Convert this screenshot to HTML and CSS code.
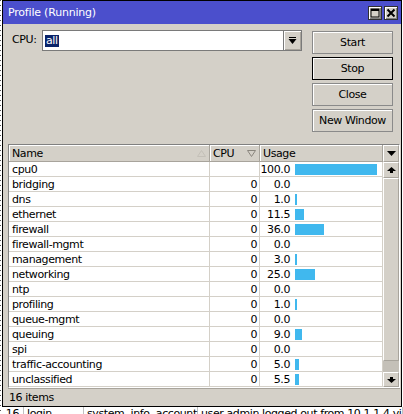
FILE: index.html
```html
<!DOCTYPE html>
<html>
<head>
    <meta charset="UTF-8">
    <title>Profile (Running)</title>
    <link rel="stylesheet" href="styles.css">
</head>
<body>
    <div class="window">
        <div class="titlebar">
            <div class="title">Profile (Running)</div>
            <div class="title-btn">
                <svg width="10" height="10" viewBox="0 0 10 10"><rect x="1" y="1" width="8" height="8" fill="none" stroke="#000" stroke-width="1"/><rect x="1" y="1" width="8" height="2" fill="#000"/></svg>
            </div>
            <div class="title-btn">
                <svg width="10" height="10" viewBox="0 0 10 10"><path d="M1.5 1.5 L8.5 8.5 M8.5 1.5 L1.5 8.5" stroke="#000" stroke-width="2"/></svg>
            </div>
        </div>
        <div class="content">
            <div class="top">
                <div class="cpu-row">
                    <span class="cpu-label">CPU:</span>
                    <div class="combo">
                        <div class="combo-field"><span class="sel">all</span></div>
                        <div class="combo-btn">
                            <svg width="9" height="8" viewBox="0 0 9 8"><rect x="1" y="0" width="7" height="1" fill="#000"/><polygon points="0.5,2 8.5,2 4.5,7" fill="#000"/></svg>
                        </div>
                    </div>
                </div>
                <div class="buttons">
                    <button class="btn">Start</button>
                    <button class="btn default">Stop</button>
                    <button class="btn">Close</button>
                    <button class="btn">New Window</button>
                </div>
            </div>
            <div class="list">
                <div class="rows">
                    <div class="row head">
                        <div class="cell">Name<svg class="sort" width="9" height="7" viewBox="0 0 9 7"><polygon points="4.5,0.5 8.5,6.5 0.5,6.5" fill="none" stroke="#c4c0b8"/></svg></div>
                        <div class="cell">CPU<svg class="sort" width="9" height="7" viewBox="0 0 9 7"><polygon points="0.5,0.5 8.5,0.5 4.5,6.5" fill="none" stroke="#8a867e"/></svg></div>
                        <div class="cell">Usage</div>
                    </div>
                    <div class="row">
                        <div class="cell">cpu0</div>
                        <div class="cell num"></div>
                        <div class="cell usage"><span class="val">100.0</span><span class="bar" style="width: 82px"></span></div>
                    </div>
                    <div class="row">
                        <div class="cell">bridging</div>
                        <div class="cell num">0</div>
                        <div class="cell usage"><span class="val">0.0</span></div>
                    </div>
                    <div class="row">
                        <div class="cell">dns</div>
                        <div class="cell num">0</div>
                        <div class="cell usage"><span class="val">1.0</span><span class="bar" style="width: 2px"></span></div>
                    </div>
                    <div class="row">
                        <div class="cell">ethernet</div>
                        <div class="cell num">0</div>
                        <div class="cell usage"><span class="val">11.5</span><span class="bar" style="width: 9px"></span></div>
                    </div>
                    <div class="row">
                        <div class="cell">firewall</div>
                        <div class="cell num">0</div>
                        <div class="cell usage"><span class="val">36.0</span><span class="bar" style="width: 29px"></span></div>
                    </div>
                    <div class="row">
                        <div class="cell">firewall-mgmt</div>
                        <div class="cell num">0</div>
                        <div class="cell usage"><span class="val">0.0</span></div>
                    </div>
                    <div class="row">
                        <div class="cell">management</div>
                        <div class="cell num">0</div>
                        <div class="cell usage"><span class="val">3.0</span><span class="bar" style="width: 2px"></span></div>
                    </div>
                    <div class="row">
                        <div class="cell">networking</div>
                        <div class="cell num">0</div>
                        <div class="cell usage"><span class="val">25.0</span><span class="bar" style="width: 20px"></span></div>
                    </div>
                    <div class="row">
                        <div class="cell">ntp</div>
                        <div class="cell num">0</div>
                        <div class="cell usage"><span class="val">0.0</span></div>
                    </div>
                    <div class="row">
                        <div class="cell">profiling</div>
                        <div class="cell num">0</div>
                        <div class="cell usage"><span class="val">1.0</span><span class="bar" style="width: 2px"></span></div>
                    </div>
                    <div class="row">
                        <div class="cell">queue-mgmt</div>
                        <div class="cell num">0</div>
                        <div class="cell usage"><span class="val">0.0</span></div>
                    </div>
                    <div class="row">
                        <div class="cell">queuing</div>
                        <div class="cell num">0</div>
                        <div class="cell usage"><span class="val">9.0</span><span class="bar" style="width: 7px"></span></div>
                    </div>
                    <div class="row">
                        <div class="cell">spi</div>
                        <div class="cell num">0</div>
                        <div class="cell usage"><span class="val">0.0</span></div>
                    </div>
                    <div class="row">
                        <div class="cell">traffic-accounting</div>
                        <div class="cell num">0</div>
                        <div class="cell usage"><span class="val">5.0</span><span class="bar" style="width: 4px"></span></div>
                    </div>
                    <div class="row">
                        <div class="cell">unclassified</div>
                        <div class="cell num">0</div>
                        <div class="cell usage"><span class="val">5.5</span><span class="bar" style="width: 4px"></span></div>
                    </div>
                </div>
                <div class="scrollbar">
                    <div class="sb-head">
                        <svg width="9" height="5" viewBox="0 0 9 5"><polygon points="0,0 9,0 4.5,5" fill="#000"/></svg>
                    </div>
                    <div class="sb-btn up">
                        <svg width="9" height="7" viewBox="0 0 9 7"><polygon points="0,4 4.5,0 9,4" fill="#000"/><rect x="3" y="4" width="3" height="2" fill="#000"/></svg>
                    </div>
                    <div class="sb-thumb"></div>
                    <div class="sb-track"></div>
                    <div class="sb-btn down">
                        <svg width="9" height="7" viewBox="0 0 9 7"><rect x="3" y="1" width="3" height="2" fill="#000"/><polygon points="0,3 9,3 4.5,7" fill="#000"/></svg>
                    </div>
                </div>
            </div>
            <div class="status">16 items</div>
        </div>
    </div>
    <div class="backdrop">
        <span class="log-cell log-id">16</span>
        <span class="log-cell log-user">login</span>
        <span class="log-cell log-topic">system, info, account</span>
        <span class="log-cell log-msg">user admin logged out from 10.1.1.4 via winbox</span>
    </div>
</body>
</html>
```

FILE: styles.css
```css
body {
    width: 403px;
    height: 414px;
    margin: 0;
    overflow: hidden;
    font-family: "DejaVu Sans", sans-serif;
    font-size: 11px;
    color: #000;
    background: #fff repeating-linear-gradient(to bottom, #555 0 1px, #fff 1px 5px) no-repeat 0 0 / 1px 100%;
}

.window {
    width: 398px;
    margin-left: 2px;
    border: 1px solid #000;
    background: #d4d0c8;
}

.titlebar {
    height: 23px;
    display: flex;
    align-items: center;
    padding: 0 3px 0 5px;
    background: #4b4fcc;
    color: #fff;
}

.title {
    flex-grow: 1;
    letter-spacing: -0.2px;
}

.title-btn {
    width: 14px;
    height: 14px;
    margin-left: 2px;
    box-sizing: border-box;
    display: flex;
    align-items: center;
    justify-content: center;
    background: #d4d0c8;
    border: 1px solid #303030;
    box-shadow: inset 1px 1px #fff, inset -1px -1px #808080;
}

.content {
    height: 382px;
    display: flex;
    flex-direction: column;
    padding: 0 1px 0 5px;
    letter-spacing: -0.4px;
}

.top {
    display: flex;
    gap: 10px;
    padding: 6px 7px 0 4px;
}

.cpu-row {
    flex: 1;
    display: flex;
    align-items: flex-start;
}

.cpu-label {
    width: 30px;
    line-height: 20px;
}

.combo {
    flex: 1;
    display: flex;
    height: 21px;
}

.combo-field {
    flex: 1;
    display: flex;
    align-items: center;
    padding-left: 2px;
    background: #fff;
    border: 1px solid #7a7a7a;
}

.sel {
    background: #0a246a;
    color: #fff;
    line-height: 12px;
    padding: 0 1px;
}

.combo-btn {
    width: 18px;
    box-sizing: border-box;
    display: flex;
    align-items: center;
    justify-content: center;
    border: 1px solid #7a7a7a;
    border-left: none;
    box-shadow: inset 1px 1px #fff, inset -1px -1px #a8a49c;
}

.buttons {
    width: 81px;
    margin-top: 1px;
    display: flex;
    flex-direction: column;
    gap: 3px;
}

.btn {
    height: 23px;
    padding: 0;
    font-family: inherit;
    font-size: 11px;
    letter-spacing: -0.4px;
    color: #000;
    background: #d4d0c8;
    border: 1px solid #8a8a8a;
    box-shadow: inset 1px 1px #fff;
}

.btn.default {
    border-color: #000;
}

.list {
    margin-top: 12px;
    display: flex;
    background: #fff;
    border: 1px solid;
    border-color: #808080 #fff #fff #808080;
}

.rows {
    flex: 1;
}

.row {
    display: grid;
    grid-template-columns: 201px 50px 1fr;
    height: 15px;
}

.cell {
    box-sizing: border-box;
    display: flex;
    align-items: center;
    padding-left: 3px;
    border-right: 1px solid #d4d0c8;
    border-bottom: 1px solid #d4d0c8;
    white-space: nowrap;
    overflow: hidden;
}

.row.head {
    height: 17px;
}

.head .cell {
    background: #d4d0c8;
    border-right-color: #a8a49c;
    border-bottom-color: #a8a49c;
    box-shadow: inset 1px 1px #fff;
}

.sort {
    margin-left: auto;
    margin-right: 3px;
}

.num {
    justify-content: flex-end;
    padding-right: 2px;
}

.usage {
    padding-left: 0;
}

.val {
    width: 30px;
    text-align: right;
}

.bar {
    height: 11px;
    margin-left: 5px;
    background: #40b8ee;
}

.scrollbar {
    width: 16px;
    display: flex;
    flex-direction: column;
    background: #d4d0c8;
}

.sb-head,
.sb-btn,
.sb-thumb {
    box-sizing: border-box;
    display: flex;
    align-items: center;
    justify-content: center;
    border: 1px solid #a8a49c;
    border-top-color: #fff;
    border-left-color: #fff;
}

.sb-head {
    height: 17px;
}

.sb-btn.up {
    height: 16px;
}

.sb-btn.down {
    height: 15px;
}

.sb-thumb {
    height: 183px;
}

.sb-track {
    height: 11px;
    background: #c4c0b8;
}

.status {
    height: 18px;
    padding-left: 1px;
    display: flex;
    align-items: center;
    border-top: 1px solid #a8a49c;
    box-sizing: border-box;
}

.backdrop {
    width: 403px;
    display: flex;
    overflow: hidden;
    line-height: 13px;
    letter-spacing: -0.4px;
    white-space: nowrap;
}

.log-cell {
    flex-shrink: 0;
    box-sizing: border-box;
    padding-left: 3px;
    border-right: 1px solid #c0c0c0;
}

.log-id {
    width: 24px;
    text-align: right;
    padding-right: 4px;
}

.log-user {
    width: 60px;
}

.log-topic {
    width: 114px;
}

.log-msg {
    flex-shrink: 1;
    min-width: 0;
    overflow: hidden;
}
```
